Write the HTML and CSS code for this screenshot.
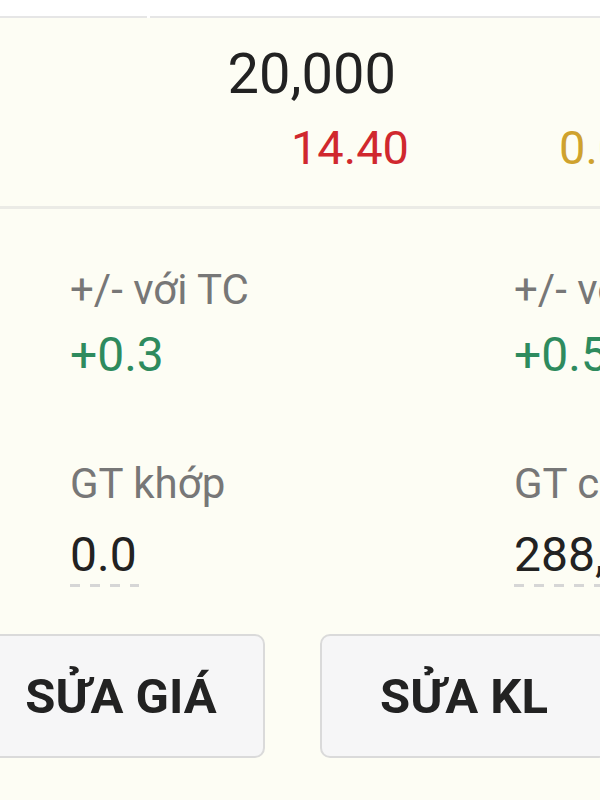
FILE: index.html
```html
<!DOCTYPE html>
<html lang="vi">
<head>
  <meta charset="UTF-8" />
  <title>Chi tiết lệnh</title>
  <link rel="stylesheet" href="styles.css">
</head>
<body>

  <div class="tabline">
    <span class="tab-left"></span>
    <span class="tab-right"></span>
  </div>

  <div class="quote">
    <div class="vol">20,000</div>
    <div class="prices">
      <span class="price down">14.40</span>
      <span class="price ref">0.00</span>
    </div>
  </div>

  <div class="stats">
    <div class="stat">
      <div class="label">+/- với TC</div>
      <div class="value up">+0.3</div>
    </div>
    <div class="stat">
      <div class="label">+/- với giá đặt</div>
      <div class="value up">+0.50</div>
    </div>
    <div class="stat">
      <div class="label">GT khớp</div>
      <div class="value"><span class="link">0.0</span></div>
    </div>
    <div class="stat">
      <div class="label">GT chờ khớp</div>
      <div class="value"><span class="link">288,000</span></div>
    </div>
  </div>

  <div class="actions">
    <button class="btn">SỬA GIÁ</button>
    <button class="btn">SỬA KL</button>
  </div>

</body>
</html>
```

FILE: styles.css
```css
* {
  box-sizing: border-box;
}

html,
body {
  margin: 0;
  padding: 0;
  width: 600px;
  height: 800px;
  overflow: hidden;
}

body {
  font-family: Roboto, "Noto Sans", sans-serif;
  background: #fdfdf4;
  color: #222;
}

.tabline {
  display: flex;
  gap: 3px;
  padding-top: 16px;
  background: #fff;
}

.tabline span {
  height: 2px;
  background: #e6e6e6;
}

.tab-left {
  width: 147px;
}

.tab-right {
  flex: 1;
}

.quote {
  padding: 26px 0 30px;
  border-bottom: 3px solid #ebebe6;
}

.vol {
  font-size: 56px;
  line-height: 60px;
  text-align: right;
  padding-right: 204px;
}

.prices {
  display: flex;
  margin-top: 16px;
  font-size: 47px;
  line-height: 56px;
  white-space: nowrap;
}

.price {
  flex-shrink: 0;
}

.price.down {
  width: 409px;
  text-align: right;
  color: #d0282e;
}

.price.ref {
  margin-left: 150px;
  color: #cfa22e;
}

.stats {
  display: grid;
  grid-template-columns: 444px 444px;
  row-gap: 77px;
  padding: 57px 0 0 70px;
  white-space: nowrap;
}

.label {
  font-size: 42px;
  line-height: 48px;
  color: #777;
}

.value {
  margin-top: 13px;
  font-size: 48px;
  line-height: 56px;
}

.value.up {
  color: #2e8b5e;
}

.link {
  display: inline-block;
  padding: 6px 2px 4px 0;
  background: repeating-linear-gradient(90deg, #d6d6d6 0 10px, transparent 10px 20px) bottom left / 100% 3px no-repeat;
}

.actions {
  display: grid;
  grid-template-columns: 288px 288px;
  column-gap: 55px;
  margin: 47px 0 0 -23px;
}

.btn {
  height: 124px;
  border: 2px solid #dadada;
  border-radius: 10px;
  background: #f6f6f7;
  font-family: Roboto, "Noto Sans", sans-serif;
  font-size: 49px;
  font-weight: 700;
  color: #222;
  cursor: pointer;
}
```
